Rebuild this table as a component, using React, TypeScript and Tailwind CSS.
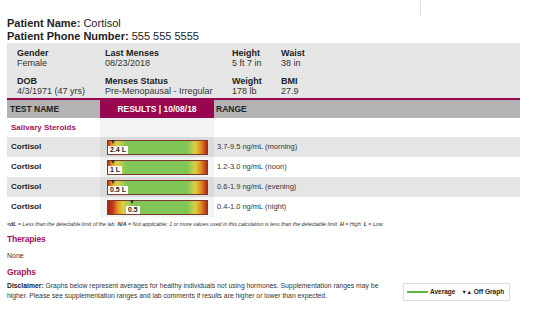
import React from "react";

const FONT = { fontFamily: '"Liberation Sans", Arial, sans-serif' };

const LOW_BAR =
  "linear-gradient(to right, #b8321c 0%, #e39a22 4%, #dccf45 9%, #7fc657 19%, #7fc657 80%, #dccf45 88%, #e3891f 94%, #b02a18 100%)";
const NIGHT_BAR =
  "linear-gradient(to right, #a8261a 0%, #c23a1a 5%, #e39a22 10%, #dccf45 15%, #7fc657 25%, #7fc657 80%, #dccf45 88%, #e3891f 94%, #b02a18 100%)";

type Row = {
  label: string;
  value: string;
  range: string;
  marker: number;
  labelLeft: number;
  bar: string;
  shaded: boolean;
};

const rows: Row[] = [
  { label: "Cortisol", value: "2.4 L", range: "3.7-9.5 ng/mL (morning)", marker: 3, labelLeft: 0, bar: LOW_BAR, shaded: true },
  { label: "Cortisol", value: "1 L", range: "1.2-3.0 ng/mL (noon)", marker: 3, labelLeft: 0, bar: LOW_BAR, shaded: false },
  { label: "Cortisol", value: "0.5 L", range: "0.6-1.9 ng/mL (evening)", marker: 3, labelLeft: 0, bar: LOW_BAR, shaded: true },
  { label: "Cortisol", value: "0.5", range: "0.4-1.0 ng/mL (night)", marker: 22, labelLeft: 18, bar: NIGHT_BAR, shaded: false },
];

function InfoCell({ label, value }: { label: string; value: string }) {
  return (
    <div className="flex flex-col">
      <div className="text-[9px] leading-[10px] font-bold text-[#222]">{label}</div>
      <div className="text-[9px] leading-[10px] text-[#333]">{value}</div>
    </div>
  );
}

export default function App() {
  return (
    <div className="w-[533px] h-[318px] bg-white overflow-hidden text-[#222]" style={FONT}>
      <div className="h-[17px] flex">
        <div className="ml-[420px] w-px h-[15px] bg-[#e2e2e2]" />
      </div>

      <div className="pl-[7px] text-[11px] leading-[13px]">
        <div>
          <span className="font-bold">Patient Name:</span> Cortisol
        </div>
        <div>
          <span className="font-bold">Patient Phone Number:</span> 555 555 5555
        </div>
      </div>

      <div className="ml-[7px] mr-[13px]">
        <div className="bg-[#e6e6e6] pl-[10px] pt-[5px] pb-[2px] grid grid-cols-[88px_127px_49px_1fr] gap-y-[8px]">
          <InfoCell label="Gender" value="Female" />
          <InfoCell label="Last Menses" value="08/23/2018" />
          <InfoCell label="Height" value="5 ft 7 in" />
          <InfoCell label="Waist" value="38 in" />
          <InfoCell label="DOB" value="4/3/1971 (47 yrs)" />
          <InfoCell label="Menses Status" value="Pre-Menopausal - Irregular" />
          <InfoCell label="Weight" value="178 lb" />
          <InfoCell label="BMI" value="27.9" />
        </div>

        <div className="border-t-2 border-[#99064f]">
          <div className="grid grid-cols-[93px_114px_1fr] h-[18px] text-[8.5px] font-bold">
            <div className="bg-[#b3b3b3] pl-[3px] flex items-center text-[#222]">TEST NAME</div>
            <div className="bg-[#99064f] text-white flex items-center justify-center">RESULTS | 10/08/18</div>
            <div className="bg-[#b3b3b3] pl-[2px] flex items-center text-[#222]">RANGE</div>
          </div>

          <div className="grid grid-cols-[93px_114px_1fr] h-[19px]">
            <div className="pl-[4px] flex items-center text-[8px] font-bold text-[#a0145c]">Salivary Steroids</div>
            <div className="bg-[#f3f3f3]" />
            <div />
          </div>

          {rows.map((r, i) => (
            <div
              key={i}
              className={`grid grid-cols-[93px_114px_1fr] h-[20px] ${r.shaded ? "bg-[#e5e5e5]" : "bg-white"}`}
            >
              <div className="pl-[4px] flex items-center text-[8px] font-bold text-[#222]">{r.label}</div>
              <div className={`pl-[7px] pr-[6px] flex items-center ${r.shaded ? "bg-[#dadada]" : "bg-[#f3f3f3]"}`}>
                <div
                  className="relative w-full h-[15px] border border-[#7a3b2c]"
                  style={{ background: r.bar }}
                >
                  <div
                    className="absolute top-[-1px] w-0 h-0 border-l-[2.5px] border-r-[2.5px] border-t-[4px] border-l-transparent border-r-transparent border-t-[#333]"
                    style={{ left: r.marker }}
                  />
                  <div
                    className="absolute bottom-0 h-[8px] px-[2px] bg-white flex items-center text-[7px] font-bold leading-none text-[#222]"
                    style={{ left: r.labelLeft }}
                  >
                    {r.value}
                  </div>
                </div>
              </div>
              <div className="pl-[3px] flex items-center text-[7.5px] text-[#333]">{r.range}</div>
            </div>
          ))}
        </div>
      </div>

      <div className="pl-[7px] mt-[3px] h-[8px] leading-[8px] text-[5.3px] italic text-[#333] whitespace-nowrap">
        <span className="font-bold">&lt;dL</span> = Less than the detectable limit of the lab.{"  "}
        <span className="font-bold">N/A</span> = Not applicable; 1 or more values used in this calculation is less than the detectable limit.{"  "}
        <span className="font-bold">H</span> = High.{"  "}
        <span className="font-bold">L</span> = Low.
      </div>

      <div className="pl-[7px] mt-[6px] text-[8.5px] leading-[10px] font-bold text-[#a0145c] tracking-[-0.02em]">Therapies</div>
      <div className="pl-[7px] mt-[7px] text-[7px] leading-[10px] text-[#333]">None</div>
      <div className="pl-[7px] mt-[6px] text-[8.5px] leading-[10px] font-bold text-[#a0145c] tracking-[-0.02em]">Graphs</div>

      <div className="flex items-center pl-[7px] pr-[23px] mt-[4px]">
        <p className="w-[385px] text-[6.8px] leading-[10px] text-[#333]">
          <b className="text-[#222]">Disclaimer:</b> Graphs below represent averages for healthy individuals not using hormones. Supplementation ranges may be higher. Please see supplementation ranges and lab comments if results are higher or lower than expected.
        </p>
        <div className="ml-auto mt-[2px] w-[107px] h-[18px] border border-[#dcdcdc] bg-white flex items-center pl-[3px] text-[6.5px] text-[#222] whitespace-nowrap">
          <div className="w-[21px] h-[1.5px] bg-[#5cb83a] shrink-0" />
          <span className="ml-[2px] font-semibold">Average</span>
          <span className="ml-[6px] text-[5.5px] tracking-[-0.05em]">▼▲</span>
          <span className="ml-[2px] font-semibold">Off Graph</span>
        </div>
      </div>
    </div>
  );
}
